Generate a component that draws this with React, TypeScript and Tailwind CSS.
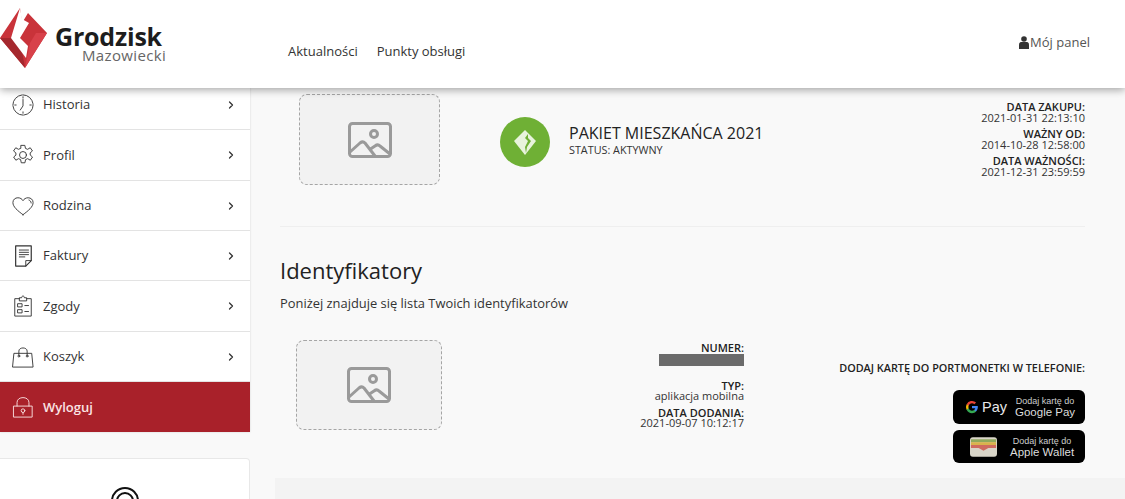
// Account page: header, side menu, active package and identifiers list.
import { ChevronRight } from "lucide-react";
import type { ReactNode } from "react";

const stroke = { fill: "none", stroke: "currentColor", strokeWidth: 1, strokeLinecap: "round", strokeLinejoin: "round" } as const;

function MenuSvg({ children }: { children: ReactNode }) {
  return (
    <svg viewBox="0 0 24 24" width="22" height="22" className="shrink-0" {...stroke}>
      {children}
    </svg>
  );
}

const menu = [
  {
    label: "Historia",
    icon: (
      <MenuSvg>
        <circle cx="12" cy="12" r="11" strokeDasharray="16 1" />
        <path d="M12 3v1.500M12 19.500V21M3 12h1.500M19.500 12H21M12 6v7l-3 4.500" />
      </MenuSvg>
    ),
  },
  {
    label: "Profil",
    icon: (
      <MenuSvg>
        <path d="M10 1.500h4l.7 3.300 2.300 1 2.900-1.700 2.400 3.500-2.500 2.100.1 2.400 2.500 2.100-2.400 3.500-2.900-1.700-2.300 1-.7 3.500h-4l-.7-3.500-2.300-1-2.900 1.700-2.400-3.500 2.500-2.100-.1-2.400-2.500-2.100 2.400-3.500L7 5.800l2.300-1z" />
        <circle cx="12" cy="12" r="3.800" />
      </MenuSvg>
    ),
  },
  {
    label: "Rodzina",
    icon: (
      <MenuSvg>
        <path d="M12 21.500C6 17 1 13 1 8.200 1 5 3.500 3 6.400 3 9 3 11 4.400 12 6.200 13 4.400 15 3 17.600 3 20.500 3 23 5 23 8.200c0 4.800-5 8.800-11 13.300z" />
        <path d="M18.500 5.500c1.500.500 2.300 1.700 2.400 3.200" />
      </MenuSvg>
    ),
  },
  {
    label: "Faktury",
    icon: (
      <MenuSvg>
        <path d="M4 1h17v16l-6 6H4z" strokeWidth="1.300" />
        <path d="M21 17h-6v6M8 5.500h10M8 8h10M8 10.500h10M8 13h6" />
      </MenuSvg>
    ),
  },
  {
    label: "Zgody",
    icon: (
      <MenuSvg>
        <path d="M8 4H3v19h18V4h-5" />
        <path d="M8 6V3h2.500c0-2.500 3-2.500 3 0H16v3zM6.500 9.500H11V13H6.500zM6.500 16H11v3.500H6.500zM14 11.500h4M14 18h4" />
      </MenuSvg>
    ),
  },
  {
    label: "Koszyk",
    icon: (
      <MenuSvg>
        <path d="M2.500 8h19L23 23H1z" />
        <path d="M7.500 10V5.500C7.500 1 16.500 1 16.500 5.500V10" />
        <circle cx="7.500" cy="11" r="1" />
        <circle cx="16.500" cy="11" r="1" />
      </MenuSvg>
    ),
  },
];

function ImagePlaceholder({ className }: { className: string }) {
  return (
    <div className={`flex shrink-0 items-center justify-center rounded-lg border border-dashed border-[#a5a5a5] bg-[#f2f2f2] ${className}`}>
      <svg viewBox="0 0 44 36" width="44" height="36" fill="none" stroke="#9a9a9a" strokeWidth="3" strokeLinejoin="round">
        <rect x="1.500" y="1.500" width="41" height="33" rx="3" />
        <circle cx="26" cy="12" r="3.500" />
        <path d="M2 30l10-9c2-1.500 3.500-1.500 5 0l10 13M21 28l6-4c2-1.500 3.500-1.500 5 0l10 8" />
      </svg>
    </div>
  );
}

function Field({ label, value }: { label: string; value: ReactNode }) {
  return (
    <div className="text-right text-[11px] leading-[10.500px] text-[#333]">
      <div className="font-semibold text-[#222]">{label}</div>
      <div>{value}</div>
    </div>
  );
}

function WalletBlock() {
  return (
    <div className="flex w-[260px] shrink-0 flex-col items-end pt-[21px]">
      <div className="text-[10.850px] font-semibold leading-[14px] text-[#222]">DODAJ KARTĘ DO PORTMONETKI W TELEFONIE:</div>
      <div className="mt-[15px] flex h-[34px] w-[132px] items-center rounded-md bg-black pl-[12px] font-['Liberation_Sans',sans-serif] text-white">
        <svg viewBox="0 0 24 24" width="14" height="14" className="shrink-0">
          <path d="M22 12.200c0-.700-.100-1.400-.200-2H12v4h5.600a4.800 4.800 0 0 1-2 3.100v2.600h3.300c1.900-1.800 3.100-4.500 3.100-7.700z" fill="#4285f4" />
          <path d="M12 22.500c2.800 0 5.100-.900 6.900-2.600l-3.300-2.600c-.900.600-2.100 1-3.600 1-2.700 0-5-1.800-5.800-4.300H2.800v2.600a10.500 10.500 0 0 0 9.200 5.900z" fill="#34a853" />
          <path d="M6.200 14c-.200-.600-.300-1.300-.300-2s.100-1.400.300-2V7.400H2.800a10.500 10.500 0 0 0 0 9.200z" fill="#fbbc04" />
          <path d="M12 5.700c1.500 0 2.900.500 4 1.600l3-3A10.500 10.500 0 0 0 2.800 7.400L6.200 10c.800-2.500 3.100-4.300 5.800-4.300z" fill="#ea4335" />
        </svg>
        <span className="ml-[3px] text-[14.500px] leading-none text-[#e8e8e8]">Pay</span>
        <div className="ml-[8px] flex flex-col text-center">
          <span className="text-[9px] leading-[10px] text-[#ccc]">Dodaj kartę do</span>
          <span className="text-[11.500px] leading-[12px] text-[#ddd]">Google Pay</span>
        </div>
      </div>
      <div className="mt-[6px] flex h-[33px] w-[132px] items-center rounded-md bg-black pl-[17px] font-['Liberation_Sans',sans-serif] text-white">
        <svg viewBox="0 0 28 20" width="27" height="20" className="shrink-0">
          <rect width="28" height="20" rx="3" fill="#d9d5c8" />
          <rect x="1" y="2" width="26" height="3" fill="#8fa85c" />
          <rect x="1" y="5" width="26" height="3" fill="#d9b24c" />
          <path d="M1 8h26v3h-8l-5 3-5-3H1z" fill="#cf6a5f" />
        </svg>
        <div className="ml-[13px] flex flex-col text-center">
          <span className="text-[9px] leading-[10px] text-[#ccc]">Dodaj kartę do</span>
          <span className="text-[11.500px] leading-[12px] text-[#ddd]">Apple Wallet</span>
        </div>
      </div>
    </div>
  );
}

export default function App() {
  return (
    <div className="h-[499px] w-[1125px] overflow-hidden bg-[#f9f9f9] font-['Open_Sans',sans-serif] text-[#222]">
      <header className="relative z-10 flex h-[88px] items-start bg-white shadow-[0_2px_8px_rgba(0,0,0,0.35)]">
        <div className="flex w-[288px] items-start">
          <svg viewBox="0 0 48 62" width="48" height="62" className="mt-[7px] shrink-0">
            <path d="M20 1L0 31l25 30 22-35L28 6l-6 10z" fill="#c9333a" />
            <path d="M0 31l25 30-3-17-10-13z" fill="#a5282e" />
            <path d="M47 26L25 61l5-25 6-10z" fill="#d8414a" />
            <path d="M20 1L11 31l15 20 2-12-8-8 9-15-7-4z" fill="#fff" />
          </svg>
          <div className="ml-[7px] mt-[21px] flex flex-col">
            <span className="text-[25px] font-bold leading-[30px] tracking-[-0.2px] text-[#1d1d1d]">Grodzisk</span>
            <span className="ml-[27px] mt-[-4px] text-[15px] leading-[16px] tracking-[0.35px] text-[#666]">Mazowiecki</span>
          </div>
        </div>
        <nav className="mt-[42px] flex gap-[19px] text-[13px] leading-[18px] text-[#333]">
          <span>Aktualności</span>
          <span>Punkty obsługi</span>
        </nav>
        <div className="ml-auto mr-[35px] mt-[33px] flex items-center text-[13px] leading-[18px] text-[#555]">
          <svg viewBox="0 0 10 13" width="10" height="13" fill="#333" className="shrink-0">
            <circle cx="5" cy="3" r="2.800" />
            <path d="M0 13V8.500C0 6.500 1.500 6 3 6h4c1.500 0 3 .500 3 2.500V13z" />
          </svg>
          <span className="ml-px">Mój panel</span>
        </div>
      </header>

      <div className="flex">
        <aside className="-mt-[8px] w-[250px] shrink-0">
          <ul className="bg-white shadow-[0_0_2px_rgba(0,0,0,0.15)]">
            {menu.map((item) => (
              <li key={item.label} className="flex h-[50.330px] items-center border-b border-[#e3e3e3] pl-[12px] pr-[13px] pt-px text-[13px] text-[#333]">
                {item.icon}
                <span className="ml-[9px]">{item.label}</span>
                <ChevronRight size={12} strokeWidth={2.500} className="ml-auto text-[#333]" />
              </li>
            ))}
            <li className="flex h-[50px] items-center bg-[#a9212a] pl-[12px] pt-px text-[13px] font-semibold text-[#fbe3e3]">
              <MenuSvg>
                <rect x="2" y="11" width="20" height="12" />
                <path d="M5.500 11V7c0-7 13-7 13 0v4M12 20v-2" />
                <circle cx="12" cy="16" r="2" />
              </MenuSvg>
              <span className="ml-[9px]">Wyloguj</span>
            </li>
          </ul>
          <div className="mt-[26px] flex h-[60px] justify-center rounded-tr border border-l-0 border-[#e8e8e8] bg-white pt-[27px]">
            <svg viewBox="0 0 30 30" width="30" height="30" fill="none" stroke="#111" strokeWidth="2">
              <circle cx="15" cy="15" r="13" />
              <circle cx="15" cy="15" r="8" />
            </svg>
          </div>
        </aside>

        <main className="min-w-0 flex-1 pr-[40px]">
          <section className="ml-[30px] flex h-[139px] items-start border-b border-[#efefef]">
            <ImagePlaceholder className="ml-[19px] mt-[6px] h-[91px] w-[141px]" />
            <div className="ml-[60px] mt-[29px] flex h-[50px] w-[50px] items-center justify-center rounded-full bg-[#6fb035]">
              <svg viewBox="0 0 22 25" width="22" height="25">
                <path d="M11 0l11 11-11 14L0 11z" fill="#e8f3dc" />
                <path d="M14 4l-3 4 3 3-3 6 1 6 1-6 4-6-3-3z" fill="#6fb035" />
              </svg>
            </div>
            <div className="ml-[19px] mt-[35px]">
              <div className="text-[16px] leading-[20px] text-[#222]">PAKIET MIESZKAŃCA 2021</div>
              <div className="text-[10.800px] leading-[13px] text-[#333]">STATUS: AKTYWNY</div>
            </div>
            <div className="ml-auto mt-[14px] flex flex-col gap-[6px]">
              <Field label="DATA ZAKUPU:" value="2021-01-31 22:13:10" />
              <Field label="WAŻNY OD:" value="2014-10-28 12:58:00" />
              <Field label="DATA WAŻNOŚCI:" value="2021-12-31 23:59:59" />
            </div>
          </section>

          <section className="ml-[30px]">
            <h2 className="mt-[28px] text-[22px] leading-[30px] text-[#222]">Identyfikatory</h2>
            <p className="mt-[9px] text-[12.900px] leading-[18px] text-[#333]">Poniżej znajduje się lista Twoich identyfikatorów</p>
            <div className="mt-[28px] flex items-start">
              <ImagePlaceholder className="ml-[16px] h-[90px] w-[146px]" />
              <div className="ml-auto mr-[81px] flex w-[110px] shrink-0 flex-col pt-[3px]">
                <Field label="NUMER:" value={<span className="ml-auto block h-[12px] w-[85px] bg-[#6b6b6b]" />} />
                <div className="mt-[15px]">
                  <Field label="TYP:" value="aplikacja mobilna" />
                </div>
                <div className="mt-[6px]">
                  <Field label="DATA DODANIA:" value="2021-09-07 10:12:17" />
                </div>
              </div>
              <WalletBlock />
            </div>
          </section>

          <div className="-mr-[40px] ml-[25px] mt-[15px] h-[30px] bg-[#f3f3f3]" />
        </main>
      </div>
    </div>
  );
}
